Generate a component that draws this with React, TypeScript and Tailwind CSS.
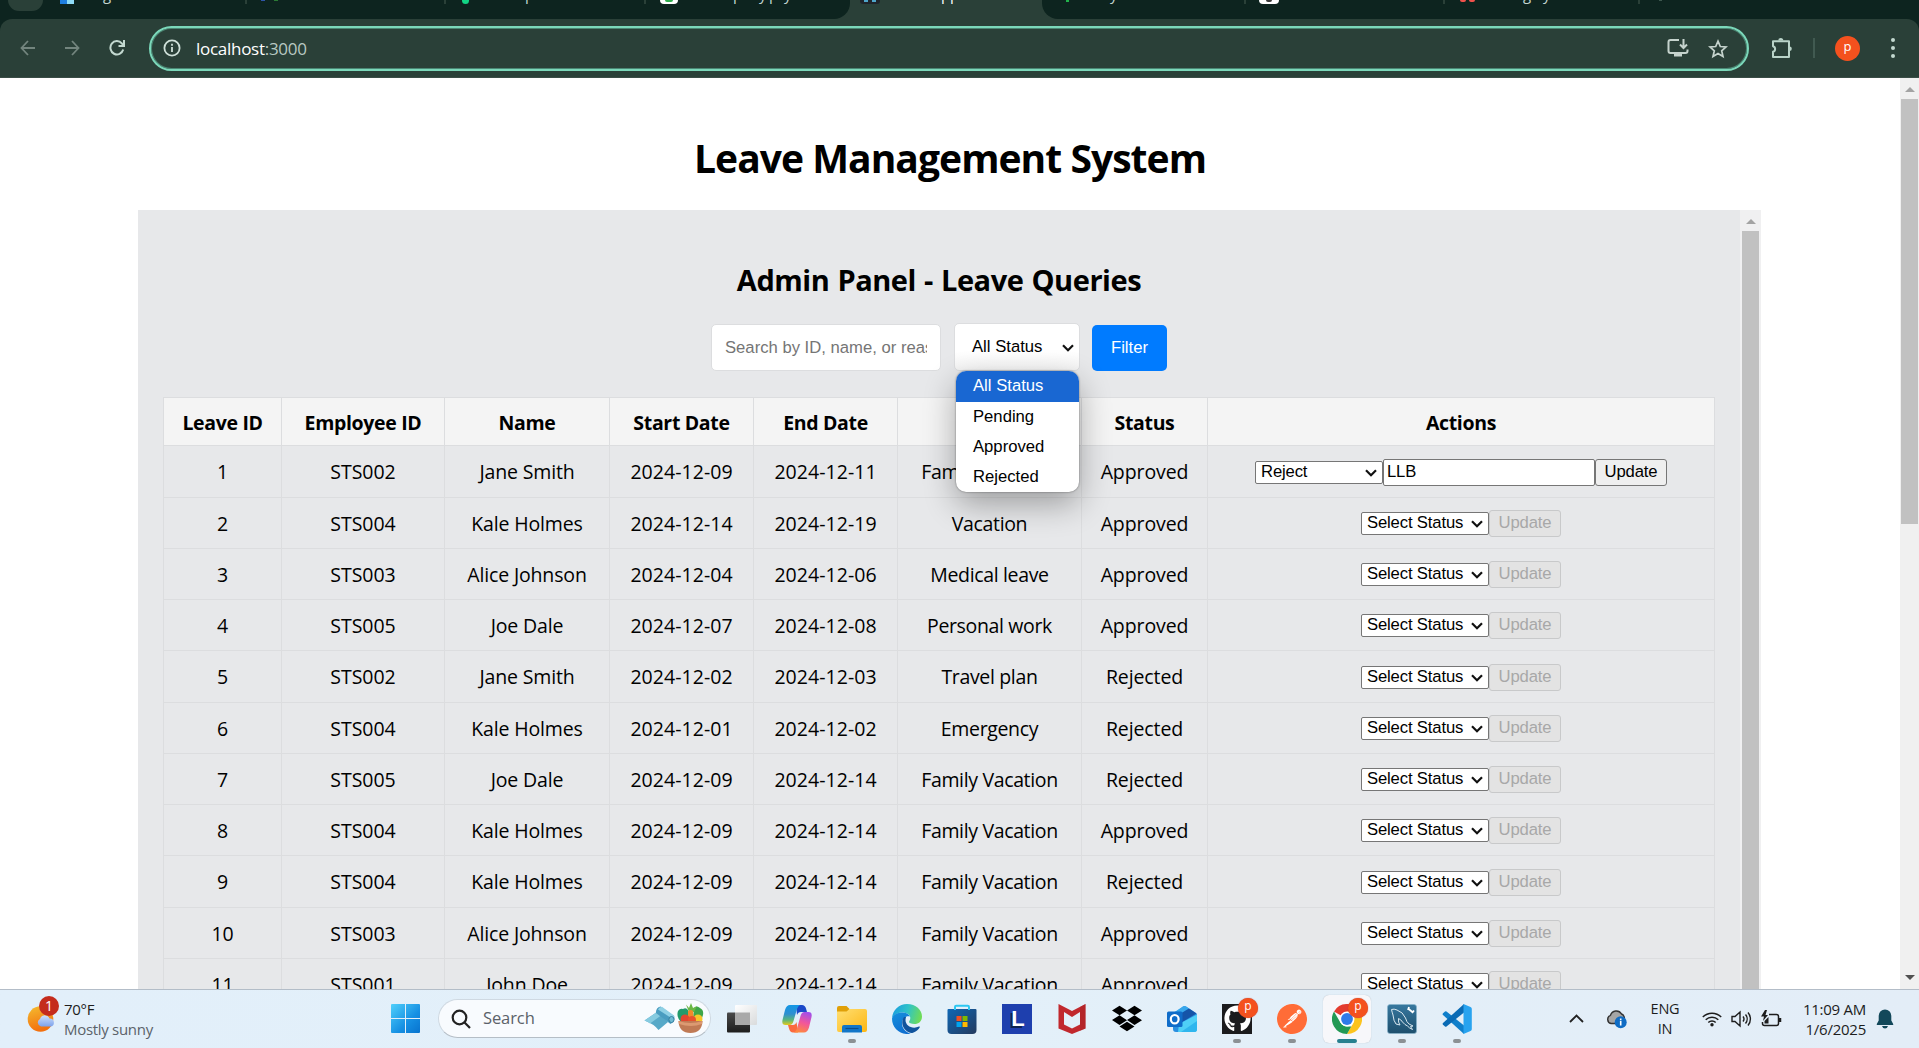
import type { ReactNode } from "react";
import { SiPostman } from "react-icons/si";
import { FaDropbox, FaGithub } from "react-icons/fa";

const segoe = "font-['Open_Sans','Noto_Sans',sans-serif]";
const arial = "font-['Liberation_Sans',Arial,sans-serif]";

type Leave = {
  id: number;
  emp: string;
  name: string;
  start: string;
  end: string;
  reason: string;
  status: string;
  h: string;
};

const leaves: Leave[] = [
  { id: 1, emp: "STS002", name: "Jane Smith", start: "2024-12-09", end: "2024-12-11", reason: "Family Vacation", status: "Approved", h: "h-[52px]" },
  { id: 2, emp: "STS004", name: "Kale Holmes", start: "2024-12-14", end: "2024-12-19", reason: "Vacation", status: "Approved", h: "h-[51px]" },
  { id: 3, emp: "STS003", name: "Alice Johnson", start: "2024-12-04", end: "2024-12-06", reason: "Medical leave", status: "Approved", h: "h-[51px]" },
  { id: 4, emp: "STS005", name: "Joe Dale", start: "2024-12-07", end: "2024-12-08", reason: "Personal work", status: "Approved", h: "h-[51px]" },
  { id: 5, emp: "STS002", name: "Jane Smith", start: "2024-12-02", end: "2024-12-03", reason: "Travel plan", status: "Rejected", h: "h-[52px]" },
  { id: 6, emp: "STS004", name: "Kale Holmes", start: "2024-12-01", end: "2024-12-02", reason: "Emergency", status: "Rejected", h: "h-[51px]" },
  { id: 7, emp: "STS005", name: "Joe Dale", start: "2024-12-09", end: "2024-12-14", reason: "Family Vacation", status: "Rejected", h: "h-[51px]" },
  { id: 8, emp: "STS004", name: "Kale Holmes", start: "2024-12-09", end: "2024-12-14", reason: "Family Vacation", status: "Approved", h: "h-[51px]" },
  { id: 9, emp: "STS004", name: "Kale Holmes", start: "2024-12-09", end: "2024-12-14", reason: "Family Vacation", status: "Rejected", h: "h-[52px]" },
  { id: 10, emp: "STS003", name: "Alice Johnson", start: "2024-12-09", end: "2024-12-14", reason: "Family Vacation", status: "Approved", h: "h-[51px]" },
  { id: 11, emp: "STS001", name: "John Doe", start: "2024-12-09", end: "2024-12-14", reason: "Family Vacation", status: "Approved", h: "h-[51px]" },
];

const gridCols = "grid grid-cols-[118px_163px_165px_144px_144px_184px_126px_507px]";

function Chevron({ className = "" }: { className?: string }) {
  return (
    <svg width="12" height="8" viewBox="0 0 12 8" className={className} fill="none" stroke="#111" strokeWidth="2.2">
      <path d="M1 1.2 6 6.2 11 1.2" />
    </svg>
  );
}

/* ---------- Browser chrome ---------- */

function Separator({ className }: { className: string }) {
  return <span className={`h-1 w-[2px] shrink-0 bg-[#2a4038] ${className}`} />;
}

function TabText({ children, className }: { children: ReactNode; className: string }) {
  return <span className={`-mt-[16px] shrink-0 whitespace-pre text-[15px] leading-[20px] text-[#c3d6cf] ${className}`}>{children}</span>;
}

function TabStrip() {
  return (
    <div className={`flex h-[19px] items-start overflow-hidden bg-[#0d241f] ${segoe}`}>
      <div className="flex h-full w-[850px] shrink-0 items-start overflow-hidden rounded-br-[16px] bg-[#0d241f]">
        <span className="ml-2 h-[11px] w-[35px] shrink-0 rounded-b-[14px] bg-[#2a4038]" />
        <span className="ml-[17px] h-1 w-[7px] shrink-0 bg-[#1f7fe0]" />
        <span className="h-1 w-[7px] shrink-0 bg-[#8fdcf7]" />
        <TabText className="ml-[29px] w-[10px]">g</TabText>
        <Separator className="ml-[132px]" />
        <span className="ml-[14px] h-px w-1 shrink-0 bg-[#2f55a8]" />
        <span className="ml-[9px] h-px w-1 shrink-0 bg-[#2b7a35]" />
        <Separator className="ml-[166px]" />
        <span className="ml-[16px] h-1 w-[7px] shrink-0 rounded-b-full bg-[#12d585]" />
        <TabText className="ml-[56px] w-[10px]">p</TabText>
        <Separator className="ml-[109px]" />
        <span className="ml-[14px] flex h-[4px] w-[18px] shrink-0 justify-center overflow-hidden rounded-b-[10px] bg-white">
          <span className="h-[2px] w-2 rounded-b-full bg-[#2fae4e]" />
        </span>
        <TabText className="ml-[55px] w-[10px]">p</TabText>
        <TabText className="ml-[16px] w-[10px]">y</TabText>
        <TabText className="w-[10px]">p</TabText>
        <TabText className="ml-[5px] w-[10px] text-[#7f958d]">y</TabText>
      </div>
      <div className="-ml-[16px] flex h-full w-[224px] shrink-0 bg-[#2a4038]">
        <span className="h-full w-[16px] rounded-br-[16px] bg-[#0d241f]" />
        <span className="ml-[10px] flex h-1 w-[20px] shrink-0 justify-center gap-1 rounded-b-[3px] bg-[#20242a]">
          <span className="h-[2px] w-1 bg-[#4fa6c9]" />
          <span className="h-[2px] w-1 bg-[#4fa6c9]" />
        </span>
        <TabText className="ml-[9px] w-[90px] text-white">React App</TabText>
        <span className="ml-auto h-full w-[16px] rounded-bl-[16px] bg-[#0d241f]" />
      </div>
      <div className="flex h-full flex-1 items-start">
        <span className="ml-[8px] h-[2px] w-[3px] bg-[#21b24b]" />
        <TabText className="ml-[41px] w-[10px]">y</TabText>
        <Separator className="ml-[124px]" />
        <span className="ml-[13px] flex h-1 w-[20px] shrink-0 justify-center rounded-b-[5px] bg-white">
          <span className="h-[2px] w-[6px] rounded-b bg-[#3a3a3a]" />
        </span>
        <Separator className="ml-[164px]" />
        <span className="ml-[15px] h-[2px] w-[6px] rounded-b bg-[#f0524c]" />
        <span className="ml-[3px] h-[2px] w-[6px] rounded-b bg-[#f0524c]" />
        <TabText className="ml-[48px] w-[10px]">g</TabText>
        <TabText className="ml-[10px] w-[10px]">y</TabText>
        <Separator className="ml-[85px]" />
        <span className="ml-[19px] h-px w-[3px] bg-[#3d574e]" />
      </div>
    </div>
  );
}

function Toolbar() {
  return (
    <div className="bg-[#0d241f]">
      <div className="flex h-[59px] items-center rounded-t-[12px] border-b border-[#3a4d46] bg-[#2a4038]">
        <svg width="16" height="18" viewBox="0 0 16 18" className="ml-5 shrink-0" fill="none" stroke="#73857e" strokeWidth="1.8">
          <path d="M15 9H2M8 2 1.5 9 8 16" />
        </svg>
        <svg width="16" height="18" viewBox="0 0 16 18" className="ml-[28px] shrink-0" fill="none" stroke="#73857e" strokeWidth="1.8">
          <path d="M1 9h13M8 2l6.500 7L8 16" />
        </svg>
        <svg width="16" height="18" viewBox="0 0 16 18" className="ml-[29px] shrink-0" fill="none" stroke="#c3d9d0" strokeWidth="2">
          <path d="M14.200 10.500A6.500 6.700 0 1 1 12.800 4.300L14 5.800" />
          <path d="M15 1v6H9.500" />
        </svg>
        <div className="ml-6 flex h-[45px] w-[1600px] shrink-0 items-center rounded-full border-2 border-[#7bd8ba] shadow-[inset_0_0_0_1px_#4b8774]">
          <svg width="18" height="18" viewBox="0 0 18 18" className="ml-3 shrink-0" fill="none" stroke="#cfe0d9" strokeWidth="1.800">
            <circle cx="9" cy="9" r="7.600" />
            <path d="M9 8v5M9 4.800v1.900" />
          </svg>
          <span className={`mt-[2px] ml-[15px] text-[17px] tracking-[-0.280px] text-white ${segoe}`}>
            localhost<span className="text-[#b8c9c2]">:3000</span>
          </span>
          <svg width="22" height="20" viewBox="0 0 22 20" className="ml-auto shrink-0" fill="none" stroke="#c5d3cd" strokeWidth="2">
            <path d="M12 2H3.500Q1.500 2 1.500 4v9q0 2 2 2h15q2 0 2-2v-1.500" />
            <path d="M7 15h8v3.500H7z" fill="#c5d3cd" stroke="none" />
            <path d="M16.500 1v8M13 6.500l3.500 3.500L20 6.500" />
          </svg>
          <svg width="20" height="20" viewBox="0 0 20 20" className="mt-px mr-[19px] ml-[19px] shrink-0" fill="none" stroke="#c5d3cd" strokeWidth="1.700">
            <path d="M10 2.200l2.300 5.300 5.700.5-4.300 3.800 1.300 5.700-5-3-5 3 1.300-5.700L2 8l5.700-.5z" />
          </svg>
        </div>
        <svg width="22" height="22" viewBox="0 0 22 22" className="ml-[22px] shrink-0" fill="none" stroke="#b9d3c8" strokeWidth="2" strokeLinejoin="round">
          <path d="M2 4.200h16V9.500V20H2v-5.200a2.900 2.900 0 0 0 0-5.600z" />
          <path d="M7.300 3.500a2.500 2.500 0 0 1 5 0zM18.500 9.500a2.300 2.300 0 0 1 0 4.600z" fill="#b9d3c8" stroke="none" />
        </svg>
        <span className="ml-[20px] h-5 w-[2px] bg-[#415a51]" />
        <span className={`ml-[20px] flex h-[25px] w-[25px] items-center justify-center rounded-full bg-[#f4511e] pb-[3px] text-[13px] text-white ${segoe}`}>p</span>
        <span className="ml-[31px] flex flex-col gap-[4px]">
          <span className="h-1 w-1 rounded-full bg-[#c3d9d0]" />
          <span className="h-1 w-1 rounded-full bg-[#c3d9d0]" />
          <span className="h-1 w-1 rounded-full bg-[#c3d9d0]" />
        </span>
      </div>
    </div>
  );
}

/* ---------- Page ---------- */

function Triangle({ down = false, color }: { down?: boolean; color: string }) {
  return (
    <svg width="10" height="5" viewBox="0 0 10 5" className="shrink-0">
      <path d={down ? "M0 0h10L5 5z" : "M0 5h10L5 0z"} fill={color} />
    </svg>
  );
}

function Cell({ children, className = "" }: { children: ReactNode; className?: string }) {
  return (
    <div className={`flex items-center justify-center border-r border-b border-[#dcdddf] whitespace-nowrap ${className}`}>
      {children}
    </div>
  );
}

function RowActions({ editing }: { editing: boolean }) {
  return (
    <div className={`flex items-center text-[16.67px] leading-none text-black ${arial}`}>
      <div className="flex h-[23px] w-[128px] items-center rounded-[2px] border border-[#767676] bg-white pl-[5px]">
        {editing ? "Reject" : "Select Status"}
        <Chevron className="mt-px mr-[5px] ml-auto" />
      </div>
      {editing && (
        <div className="flex h-[27px] w-[212px] items-center rounded-[2px] border border-[#767676] bg-white pl-[3px]">LLB</div>
      )}
      <div
        className={
          editing
            ? "flex h-[27px] w-[72px] items-center justify-center rounded-[3px] border border-[#767676] bg-[#efefef]"
            : "flex h-[27px] w-[72px] items-center justify-center rounded-[3px] border border-[#c8c9ca] bg-[#e3e3e3] text-[#a8a8a8]"
        }
      >
        Update
      </div>
    </div>
  );
}

function Filters() {
  return (
    <div className={`mt-[23px] flex items-end justify-center text-[16.67px] leading-none ${arial}`}>
      <div className="flex h-[47px] w-[230px] items-center rounded-[5px] border border-[#dcdddf] bg-white px-[13px] pt-px text-[#757575]">
        <span className="overflow-hidden leading-6 whitespace-nowrap">Search by ID, name, or reason</span>
      </div>
      <div className="relative ml-[13px]">
        <div className="flex h-[48px] w-[126px] items-center rounded-[5px] border border-[#dcdddf] bg-linear-to-b from-white from-60% to-[#f4f4f4] pt-px pl-[17px] text-black">
          All Status
          <Chevron className="mr-[5px] ml-auto" />
        </div>
        <div className="absolute top-[48px] left-[2px] z-10 w-[123px] overflow-hidden rounded-[10px] bg-white text-black shadow-[0_0_2px_rgba(0,0,0,0.5),0_12px_32px_rgba(0,0,0,0.32)]">
          <div className="flex h-[31px] items-center bg-[#1967d2] pl-[17px] text-white">All Status</div>
          <div className="flex h-[30px] items-center pl-[17px]">Pending</div>
          <div className="flex h-[30px] items-center pl-[17px]">Approved</div>
          <div className="flex h-[30px] items-center pl-[17px]">Rejected</div>
        </div>
      </div>
      <div className="ml-[12px] flex h-[46px] w-[75px] items-center justify-center rounded-[5px] bg-[#007bff] text-white">Filter</div>
    </div>
  );
}

function LeaveTable() {
  const head = ["Leave ID", "Employee ID", "Name", "Start Date", "End Date", "Reason", "Status", "Actions"];
  return (
    <div className="mt-[26px] ml-[25px] w-[1552px] border-t border-l border-[#dcdddf] text-[19.500px] tracking-[-0.15px] text-black">
      <div className={`${gridCols} h-[48px] bg-[#f4f4f4] font-bold`}>
        {head.map((h) => (
          <Cell key={h} className="pt-[3px] text-[19.500px] tracking-[-0.33px]">
            {h}
          </Cell>
        ))}
      </div>
      {leaves.map((l) => (
        <div key={l.id} className={`${gridCols} ${l.h}`}>
          <Cell className="pt-px">{l.id}</Cell>
          <Cell className="pt-px tracking-[-0.05px]">{l.emp}</Cell>
          <Cell className="pt-px">{l.name}</Cell>
          <Cell className="pt-px tracking-[0.05px]">{l.start}</Cell>
          <Cell className="pt-px tracking-[0.05px]">{l.end}</Cell>
          <Cell className="pt-px tracking-[-0.35px]">{l.reason}</Cell>
          <Cell className="pt-px tracking-[-0.1px]">{l.status}</Cell>
          <Cell className="pt-px">
            <RowActions editing={l.id === 1} />
          </Cell>
        </div>
      ))}
    </div>
  );
}

function Page() {
  return (
    <div className={`flex h-[911px] overflow-hidden bg-white ${segoe}`}>
      <div className="w-[1900px] shrink-0">
        <h1 className="mt-[53px] h-[79px] text-center text-[39px] leading-[54px] font-bold tracking-[-0.95px] text-black">Leave Management System</h1>
        <div className="ml-[138px] flex h-[779px] w-[1623px] overflow-hidden bg-[#e7e8ea]">
          <div className="w-[1602px] shrink-0">
            <h2 className="mt-[50px] h-[40px] text-center text-[29px] leading-[40px] font-bold tracking-[-0.45px] [word-spacing:1px] text-black">Admin Panel - Leave Queries</h2>
            <Filters />
            <LeaveTable />
          </div>
          <div className="flex flex-1 flex-col items-center bg-[#f0f0f1] pt-[9px]">
            <Triangle color="#a3a3a3" />
            <div className="mt-[7px] w-[17px] flex-1 bg-[#c1c1c1]" />
          </div>
        </div>
      </div>
      <div className="flex flex-1 flex-col items-center bg-[#f0f0f0] pt-[9px]">
        <Triangle color="#a3a3a3" />
        <div className="mt-[7px] h-[425px] w-[17px] bg-[#c1c1c1]" />
        <div className="mt-auto mb-[9px] flex">
          <Triangle down color="#505050" />
        </div>
      </div>
    </div>
  );
}

/* ---------- Taskbar ---------- */

function WeatherIcon() {
  return (
    <div className="relative ml-[27px] h-[38px] w-[32px] shrink-0">
      <svg width="30" height="38" viewBox="0 0 30 38" className="mt-px">
        <defs>
          <linearGradient id="sun" x1="0" y1="0" x2="0.3" y2="1">
            <stop offset="0" stopColor="#f4bd2f" />
            <stop offset="1" stopColor="#f3700f" />
          </linearGradient>
          <linearGradient id="cl" x1="0" y1="0" x2="0" y2="1">
            <stop offset="0" stopColor="#cfe0fb" />
            <stop offset="1" stopColor="#7da2ec" />
          </linearGradient>
        </defs>
        <circle cx="13.500" cy="18" r="12.800" fill="url(#sun)" />
        <path d="M14 25.500a4 4 0 0 1-1-7.500 5 5 0 0 1 9.500-.5 4.100 4.100 0 0 1 1.500 8z" fill="url(#cl)" />
      </svg>
      <span className="absolute -top-[4px] left-[12px] flex h-[20px] w-[20px] items-center justify-center rounded-full bg-[#c42b1c] text-[14px] text-white">1</span>
    </div>
  );
}

function PBadge() {
  return (
    <span className="absolute -top-[6px] left-[16px] flex h-[20px] w-[20px] items-center justify-center rounded-full bg-[#f4511e] pb-[3px] text-[12px] text-white shadow-[0_0_1px_#a33]">p</span>
  );
}

function TaskbarItem({ children, mark, active = false, badge = false }: { children: ReactNode; mark?: boolean; active?: boolean; badge?: boolean }) {
  return (
    <div className={`relative mr-[7px] flex h-[48px] w-[48px] shrink-0 items-center justify-center rounded-[6px] ${active ? "bg-[#f7f7fa] shadow-[0_0_1px_#a9b4bd]" : ""}`}>
      <div className="relative flex h-[30px] w-[30px] items-center justify-center">
        {children}
        {badge && <PBadge />}
      </div>
      {mark && <span className="absolute bottom-0 left-[20px] h-1 w-2 rounded-full bg-[#8b9094]" />}
      {active && <span className="absolute bottom-0 left-[14px] h-1 w-5 rounded-full bg-[#26808f]" />}
    </div>
  );
}

function TaskView() {
  return (
    <svg width="30" height="30" viewBox="0 0 30 30">
      <defs>
        <linearGradient id="tv1" x1="0" y1="0" x2="0" y2="1">
          <stop offset="0" stopColor="#4a4a4a" />
          <stop offset="1" stopColor="#1d1d1d" />
        </linearGradient>
        <linearGradient id="tv2" x1="0" y1="0" x2="1" y2="1">
          <stop offset="0" stopColor="#ffffff" />
          <stop offset="1" stopColor="#d9dbdc" />
        </linearGradient>
      </defs>
      <rect x="0" y="8.500" width="23" height="20" rx="1" fill="url(#tv1)" />
      <rect x="8" y="1" width="22" height="20" rx="1" fill="url(#tv2)" />
      <rect x="8" y="8.500" width="15" height="12.500" fill="#a9a9a9" />
    </svg>
  );
}

function Copilot() {
  return (
    <svg width="30" height="30" viewBox="0 0 30 30">
      <defs>
        <linearGradient id="cp1" x1="0" y1="0" x2="0" y2="1">
          <stop offset="0" stopColor="#1297e6" />
          <stop offset="0.45" stopColor="#2f8fd0" />
          <stop offset="0.750" stopColor="#5cb67a" />
          <stop offset="1" stopColor="#e6c91c" />
        </linearGradient>
        <linearGradient id="cp2" x1="0.6" y1="0" x2="0.3" y2="1">
          <stop offset="0" stopColor="#a44fe8" />
          <stop offset="0.5" stopColor="#f2569a" />
          <stop offset="1" stopColor="#ff8a3c" />
        </linearGradient>
      </defs>
      <path d="M14 1h6q3 0 4 3.500l1 3.500h-6q-3 0-4 3z" fill="#1a49c9" />
      <path d="M16 28.500h-5q-3 0-4-4L6 21h5q2.500 0 3.500-3z" fill="#fb6a3f" />
      <path d="M8 1h10q-2 1-3 4l-3.500 12q-1 4-4 4H3.500Q-.5 21 .5 16L3 6Q4.500 1 8 1z" fill="url(#cp1)" />
      <path d="M22 28.500H12q2-1 3-4L18.500 12q1-4 4-4h4Q30.500 8 29.500 13L27 23.500q-1.500 5-5 5z" fill="url(#cp2)" />
    </svg>
  );
}

function Explorer() {
  return (
    <svg width="30" height="30" viewBox="0 0 30 30">
      <defs>
        <linearGradient id="fx" x1="0" y1="0" x2="1" y2="1">
          <stop offset="0" stopColor="#ffdf73" />
          <stop offset="1" stopColor="#fdb714" />
        </linearGradient>
      </defs>
      <path d="M0 4q0-2 2-2h7.500l3 3v5H0z" fill="#e0a008" />
      <path d="M0 7.500h9.500l3-2.500H28q2 0 2 2v19q0 2-2 2H2q-2 0-2-2z" fill="url(#fx)" />
      <path d="M5 28.500V23q0-2 2-2h16q2 0 2 2v5.500z" fill="#1276c8" />
      <path d="M8.500 24.500h13" stroke="#0a4c8c" strokeWidth="1.200" />
    </svg>
  );
}

function Edge() {
  return (
    <svg width="30" height="30" viewBox="0 0 30 30">
      <defs>
        <linearGradient id="ed1" x1="0" y1="0.3" x2="1" y2="0.5">
          <stop offset="0" stopColor="#1a9de0" />
          <stop offset="0.5" stopColor="#2fc3c8" />
          <stop offset="1" stopColor="#6fdc55" />
        </linearGradient>
        <linearGradient id="ed2" x1="0" y1="0" x2="0.5" y2="1">
          <stop offset="0" stopColor="#1690dd" />
          <stop offset="1" stopColor="#0f6fd0" />
        </linearGradient>
      </defs>
      <path d="M0 14.500C.5 6 7 0 15 0c9 0 15 6 15 12.500 0 5-3.500 7.500-7.500 7.500-3.500 0-5.500-1.200-5.500-2 0-1 1.300-1.500 1.300-4 0-3.200-3.500-5.500-7.800-5.500C5 8.500 1 11.500 0 14.500z" fill="url(#ed1)" />
      <path d="M0 14.500C1 10.800 5 8.500 10.500 8.500c4 0 6.500 1.700 7.500 4-4-1-8 2-8 7 0 5 4 9 9 10.300C9 31.500 0 25 0 14.500z" fill="url(#ed2)" />
      <path d="M12 13c-3 4-2 10 2 13.500 2 1.800 4.500 3 7 2.300 3-1 5.500-3.300 6.800-5.500.3-.7-.2-1-.8-.7-6.500 3-13.500-.6-13.500-6.600 0-1.500.5-2.500.5-3z" fill="#10539d" />
    </svg>
  );
}

function Store() {
  return (
    <svg width="30" height="30" viewBox="0 0 30 30">
      <defs>
        <linearGradient id="st" x1="0" y1="0" x2="1" y2="1">
          <stop offset="0" stopColor="#0f67b5" />
          <stop offset="1" stopColor="#243a5e" />
        </linearGradient>
      </defs>
      <path d="M8 6V3q0-1.200 1.200-1.200h11.600Q22 1.800 22 3v3" fill="none" stroke="#2cc7f2" strokeWidth="2" />
      <path d="M.5 6q0-1 1-1h27q1 0 1 1v20q0 4-4 4h-21q-4 0-4-4z" fill="url(#st)" />
      <path d="M8 6V5M22 6V5" stroke="#2cc7f2" strokeWidth="2" />
      <rect x="9.500" y="12" width="5" height="5" fill="#f25022" />
      <rect x="15.500" y="12" width="5" height="5" fill="#7fba00" />
      <rect x="9.500" y="18" width="5" height="5" fill="#00a4ef" />
      <rect x="15.500" y="18" width="5" height="5" fill="#ffb900" />
    </svg>
  );
}

function Mcafee() {
  return (
    <svg width="28" height="30" viewBox="0 0 28 30">
      <path fillRule="evenodd" d="M.5 0 14 7 27.500 0v24.500L14 30 .5 24.500zM6 8v12.500l8 4 8-4V8l-8 5z" fill="#c1282d" />
      <path d="M22 3 27.500 0v24.500L22 26.800z" fill="#a82226" opacity=".5" />
    </svg>
  );
}

function Outlook() {
  return (
    <svg width="30" height="30" viewBox="0 0 30 30">
      <path d="M6 10 16 2.500q1.500-1 3 0L29 9q1 .8 1 2v14q0 3-3 3H9q-3 0-3-3z" fill="#2a8fe0" />
      <path d="M6 9 16 2.500q1.500-1 3 0l3 2L8 13z" fill="#37a7ec" />
      <path d="M8 13 22 4.500 29.500 9.500 12 20z" fill="#1554a8" />
      <path d="M12 20 30 10.500V25q0 3-3 3H11z" fill="#4fd0f7" />
      <path d="M14 28 30 17v8q0 3-3 3z" fill="#2fb6ee" />
      <rect x="0" y="7.500" width="15.500" height="15.500" rx="1.500" fill="#0f6cc9" />
      <ellipse cx="7.700" cy="15.200" rx="3.900" ry="4.200" fill="none" stroke="#fff" strokeWidth="2.200" />
    </svg>
  );
}

function Chrome() {
  return (
    <svg width="30" height="30" viewBox="0 0 30 30">
      <path d="M15 15 2 7.500A15 15 0 0 1 28 7.500z" fill="#e33b2e" />
      <path d="M15 7.500h13A15 15 0 0 1 15 30l6.500-11.200z" fill="#fcc31e" />
      <path d="M2 7.500 8.500 18.800Q11 22.500 15 22.500h4.300L15 30A15 15 0 0 1 2 7.500z" fill="#229954" />
      <circle cx="15" cy="15" r="7.500" fill="#fff" />
      <circle cx="15" cy="15" r="5.900" fill="#2f7bea" />
    </svg>
  );
}

function Workbench() {
  return (
    <svg width="30" height="30" viewBox="0 0 30 30">
      <defs>
        <linearGradient id="wb" x1="0" y1="0" x2="0" y2="1">
          <stop offset="0" stopColor="#37789f" />
          <stop offset="1" stopColor="#1e4f6d" />
        </linearGradient>
      </defs>
      <rect x=".5" y=".5" width="29" height="29" rx="2.500" fill="url(#wb)" stroke="#8ab4cb" strokeWidth=".7" />
      <path d="M9 20Q6.500 17 6 11 5 8 4.500 5.500 7 4.500 10 6q6 2 8.500 8 1 4 3.500 6l4 2-2.500.5 2 3Q22 24 20.500 22q-2.500-1-5-4-1.500-2.500-4-3.500-.5 4 1.500 6.500z" fill="none" stroke="#d9e8f0" strokeWidth="1" />
      <path d="M21 4.500 26 8.500M22 3l-1 3M27 6.500l-2 2.500" stroke="#fff" strokeWidth="1.800" />
    </svg>
  );
}

function VsCode() {
  return (
    <svg width="30" height="30" viewBox="0 0 30 30">
      <path d="M1 9.300 3 7.500q.7-.5 1.500 0L22 21.500V30L1 11q-.8-.8 0-1.700z" fill="#0f7fcb" />
      <path d="M1 20.700 3 22.500q.7.500 1.500 0L22 8.500V0L1 19q-.8.800 0 1.700z" fill="#0a6bb5" />
      <path d="M21.500 0 28.500 3q1.300.6 1.300 2v20q0 1.400-1.300 2l-7 3z" fill="#28a3ef" />
    </svg>
  );
}

function PaperTowel() {
  return (
    <svg width="31" height="26" viewBox="0 0 31 26">
      <path d="M.5 14.500 13 6l11 10-9.500 8Q10 18 .5 14.500z" fill="#57a9c8" />
      <path d="M.5 14.500 13 6l4 3.500-11 8Q3.500 15.500.5 14.500z" fill="#86cbe0" />
      <path d="M12 7q-.5-5 4.500-6.500L30 10q1.500 5-3.500 8z" fill="#4a9dc0" />
      <path d="M14 3.500Q15 1 18 .8L30 9.500q1 2-.5 4z" fill="#8fd0e4" />
      <ellipse cx="27.500" cy="13.500" rx="2.600" ry="3" fill="#6fbad3" stroke="#357f9f" strokeWidth="1" />
    </svg>
  );
}

function VeggieBowl() {
  return (
    <svg width="27" height="31" viewBox="0 0 27 31">
      <path d="M1 8q2-3 5-2 3-2 5 1l1 9-8 3Q-1 14 1 8z" fill="#239a6b" />
      <path d="M17 5q3-3 6 0 4 2 3 7l-2 6-8-2z" fill="#3fa548" />
      <path d="M9 1.500 12 5l2-5 2 5 4-2-3 6h-5z" fill="#6ab743" />
      <path d="M11 8q3-2 5 0l1 9h-6z" fill="#f08a2b" />
      <circle cx="8" cy="16" r="4.500" fill="#e2452f" />
      <circle cx="21" cy="16" r="4.500" fill="#f6c52a" />
      <circle cx="15" cy="17" r="4" fill="#e8512d" />
      <path d="M1.500 18h24q-.5 12-12 12t-12-12z" fill="#c07a55" />
      <path d="M1.500 18q12 4 24 0l-.5 3q-11 4-23 0z" fill="#dc9a72" />
    </svg>
  );
}

function Tray() {
  return (
    <>
      <svg width="15" height="9" viewBox="0 0 15 9" className="ml-auto shrink-0" fill="none" stroke="#222" strokeWidth="1.800">
        <path d="M1 8 7.500 1.500 14 8" />
      </svg>
      <svg width="22" height="20" viewBox="0 0 22 20" className="mt-[2px] ml-[22px] shrink-0">
        <path d="M5 13.500a4.300 4.300 0 0 1-.5-8.200A6 6 0 0 1 15.500 4a4.500 4.500 0 0 1 2.500 6l-4 3.500z" fill="#a5a5a5" stroke="#333" strokeWidth="1.400" />
        <circle cx="14.700" cy="12.300" r="6" fill="#0f6cc4" />
        <path d="M14.700 11v4.500M14.700 8.600v1.600" stroke="#fff" strokeWidth="1.600" />
      </svg>
      <div className="ml-[21px] w-[32px] text-center text-[14.500px] leading-[20px] tracking-[-0.2px]">
        ENG
        <br />
        IN
      </div>
      <svg width="20" height="16" viewBox="0 0 20 16" className="ml-[21px] shrink-0" fill="none" stroke="#1d1d1d" strokeWidth="1.500">
        <path d="M.8 6a13 13 0 0 1 18.400 0M3.700 8.800a9 9 0 0 1 12.600 0M6.300 11.500a5.200 5.200 0 0 1 7.400 0" />
        <circle cx="10" cy="13.800" r="1.700" fill="#1d1d1d" stroke="none" />
      </svg>
      <svg width="21" height="18" viewBox="0 0 21 18" className="ml-[9px] shrink-0" fill="none" stroke="#1d1d1d" strokeWidth="1.400">
        <path d="M1 6.500h3L9 2v14l-5-4.500H1zM12 6.500a4 4 0 0 1 0 5M14.500 4.500a7 7 0 0 1 0 9M17 2.500a10 10 0 0 1 0 13" />
      </svg>
      <svg width="21" height="18" viewBox="0 0 21 18" className="ml-[9px] shrink-0" fill="none" stroke="#1d1d1d" strokeWidth="1.500">
        <path d="M8 4.500h7.500q2 0 2 2v7q0 2-2 2h-12q-2 0-2-2V12" />
        <path d="M4 0 0 6.500h3L2 11 7 5H4.500L6 0z" fill="#1d1d1d" stroke="none" />
        <path d="M3.500 13.500V11L7.500 7v6.500z" fill="#1d1d1d" stroke="none" />
        <path d="M19 8v4" strokeWidth="2.500" />
      </svg>
      <div className="ml-[12px] w-[72px] text-right text-[15px] leading-[20px] tracking-[-0.25px] whitespace-nowrap">
        11:09 AM
        <br />
        1/6/2025
      </div>
      <svg width="18" height="20" viewBox="0 0 18 20" className="mr-[25px] ml-[10px] shrink-0" fill="#12485a">
        <path d="M9 .5a6.300 6.300 0 0 1 6.300 6.300v4.700L17.200 15v1H.8v-1l1.900-3.500V6.800A6.300 6.300 0 0 1 9 .5zM6 17h6q-.8 2.500-3 2.500T6 17z" />
      </svg>
    </>
  );
}

function Taskbar() {
  return (
    <div className={`flex h-[59px] items-center border-t border-[#b3bdc8] bg-linear-to-r from-[#e2effa] via-[#e3f0f9] to-[#e3edf7] pb-px text-[#1d1d1d] ${segoe}`}>
      <WeatherIcon />
      <div className="ml-[5px] w-[100px] text-[15px] leading-[20px] tracking-[-0.3px] whitespace-nowrap">
        70°F
        <div className="text-[#5b6269]">Mostly sunny</div>
      </div>
      <svg width="29" height="29" viewBox="0 0 29 29" className="ml-[227px] shrink-0">
        <defs>
          <linearGradient id="win" x1="0" y1="0" x2="1" y2="1">
            <stop offset="0" stopColor="#50d0fb" />
            <stop offset="0.6" stopColor="#1690e3" />
            <stop offset="1" stopColor="#0873ce" />
          </linearGradient>
        </defs>
        <path d="M1 0h13v14H0V1q0-1 1-1zM15 0h13q1 0 1 1v13H15zM0 15h14v14H1q-1 0-1-1zM15 15h14v13q0 1-1 1H15z" fill="url(#win)" />
      </svg>
      <div className="ml-[18px] flex h-[39px] w-[273px] shrink-0 items-center rounded-full border border-[#cfd9e2] border-b-[#b5bec6] bg-[#f8fbfe]">
        <svg width="20" height="20" viewBox="0 0 20 20" className="ml-[12px]" fill="none" stroke="#222" strokeWidth="2.200">
          <circle cx="8.500" cy="8.500" r="6.800" />
          <path d="M13.300 13.300 19 19" />
        </svg>
        <span className="ml-[12px] text-[16.500px] tracking-[-0.1px] text-[#5b6269]">Search</span>
        <div className="mr-[6px] ml-auto flex items-center gap-[2px]">
          <PaperTowel />
          <VeggieBowl />
        </div>
      </div>
      <div className="ml-[7px] flex">
        <TaskbarItem><TaskView /></TaskbarItem>
        <TaskbarItem><Copilot /></TaskbarItem>
        <TaskbarItem mark><Explorer /></TaskbarItem>
        <TaskbarItem><Edge /></TaskbarItem>
        <TaskbarItem><Store /></TaskbarItem>
        <TaskbarItem>
          <span className={`flex h-[30px] w-[30px] items-center justify-center bg-[#1e3fae] pl-[2px] text-[22px] font-bold text-white [text-shadow:-2px_2px_0_#0b2350] ${arial}`}>L</span>
        </TaskbarItem>
        <TaskbarItem><Mcafee /></TaskbarItem>
        <TaskbarItem><FaDropbox size={31} color="#000" /></TaskbarItem>
        <TaskbarItem><Outlook /></TaskbarItem>
        <TaskbarItem mark badge>
          <span className="flex h-[30px] w-[30px] items-center justify-center bg-[#1b1b1d]">
            <FaGithub size={27} color="#fff" />
          </span>
        </TaskbarItem>
        <TaskbarItem mark>
          <span className="flex h-[30px] w-[30px] items-center justify-center rounded-full bg-white">
            <SiPostman size={30} color="#ff6c37" />
          </span>
        </TaskbarItem>
        <TaskbarItem active badge><Chrome /></TaskbarItem>
        <TaskbarItem mark><Workbench /></TaskbarItem>
        <TaskbarItem mark><VsCode /></TaskbarItem>
      </div>
      <Tray />
    </div>
  );
}

export default function App() {
  return (
    <div className="h-[1048px] w-[1919px] overflow-hidden">
      <TabStrip />
      <Toolbar />
      <Page />
      <Taskbar />
    </div>
  );
}
